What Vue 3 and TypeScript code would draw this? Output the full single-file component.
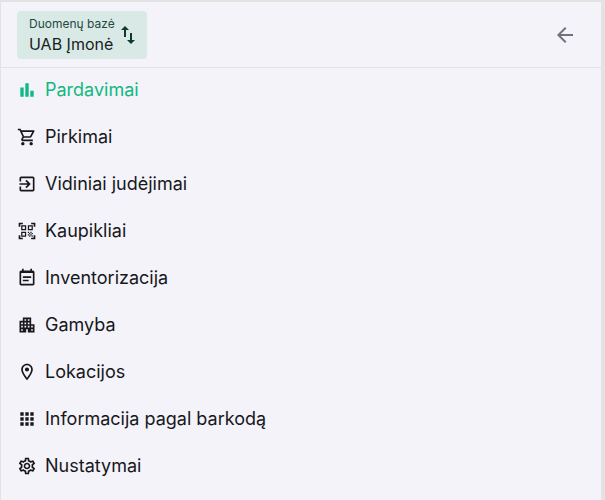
<script setup lang="ts">
interface Item { label: string; d: string; active?: boolean }
const items: Item[] = [
  { label: 'Pardavimai', active: true, d: 'M4 9h4v11H4zm12 4h4v7h-4zm-6-9h4v16h-4z' },
  { label: 'Pirkimai', d: 'M15.55 13c.75 0 1.41-.41 1.75-1.03l3.58-6.49c.37-.66-.11-1.48-.87-1.48H5.21l-.94-2H1v2h2l3.6 7.59-1.35 2.44C4.52 15.37 5.48 17 7 17h12v-2H7l1.1-2h7.45zM6.16 6h12.15l-2.76 5H8.53L6.16 6zM7 18c-1.1 0-1.99.9-1.99 2S5.9 22 7 22s2-.9 2-2-.9-2-2-2zm10 0c-1.1 0-1.99.9-1.99 2s.89 2 1.99 2 2-.9 2-2-.9-2-2-2z' },
  { label: 'Vidiniai judėjimai', d: 'M10.09 15.59 11.5 17l5-5-5-5-1.41 1.41L12.67 11H3v2h9.67l-2.58 2.59zM19 3H5c-1.11 0-2 .9-2 2v4h2V5h14v14H5v-4H3v4c0 1.1.89 2 2 2h14c1.1 0 2-.9 2-2V5c0-1.1-.9-2-2-2z' },
  { label: 'Kaupikliai', d: 'M9.5 6.5v3h-3v-3h3M11 5H5v6h6V5zm-1.5 9.5v3h-3v-3h3M11 13H5v6h6v-6zm6.5-6.5v3h-3v-3h3M19 5h-6v6h6V5zm-6 8h1.5v1.5H13V13zm1.5 1.5H16V16h-1.5v-1.5zM16 13h1.5v1.5H16V13zm-3 3h1.5v1.5H13V16zm1.5 1.5H16V19h-1.5v-1.5zM16 16h1.5v1.5H16V16zm1.5-1.5H19V16h-1.5v-1.5zm0 3H19V19h-1.5v-1.5zM22 7h-2V4h-3V2h5v5zm0 15v-5h-2v3h-3v2h5zM2 22h5v-2H4v-3H2v5zM2 2v5h2V4h3V2H2z' },
  { label: 'Inventorizacija', d: 'M17 10H7v2h10v-2zM19 3h-1V1h-2v2H8V1H6v2H5c-1.1 0-2 .9-2 2v14c0 1.1.9 2 2 2h14c1.1 0 2-.9 2-2V5c0-1.1-.9-2-2-2zm0 16H5V6h14v13zm-5-5H7v2h7v-2z' },
  { label: 'Gamyba', d: 'M17 11V3H7v4H3v14h8v-4h2v4h8V11h-4zM7 19H5v-2h2v2zm0-4H5v-2h2v2zm0-4H5V9h2v2zm4 4H9v-2h2v2zm0-4H9V9h2v2zm0-4H9V5h2v2zm4 8h-2v-2h2v2zm0-4h-2V9h2v2zm0-4h-2V5h2v2zm4 12h-2v-2h2v2zm0-4h-2v-2h2v2z' },
  { label: 'Lokacijos', d: 'M12 2C8.13 2 5 5.13 5 9c0 5.25 7 13 7 13s7-7.75 7-13c0-3.87-3.13-7-7-7zM7 9c0-2.76 2.24-5 5-5s5 2.24 5 5c0 2.88-2.88 7.19-5 9.88C9.92 16.21 7 11.85 7 9zm5-2.5a2.5 2.5 0 1 0 0 5 2.5 2.5 0 0 0 0-5z' },
  { label: 'Informacija pagal barkodą', d: 'M4 8h4V4H4v4zm6 12h4v-4h-4v4zm-6 0h4v-4H4v4zm0-6h4v-4H4v4zm6 0h4v-4h-4v4zm6-10v4h4V4h-4zm-6 4h4V4h-4v4zm6 6h4v-4h-4v4zm0 6h4v-4h-4v4z' },
  { label: 'Nustatymai', d: 'M19.43 12.98c.04-.32.07-.64.07-.98 0-.34-.03-.66-.07-.98l2.11-1.65c.19-.15.24-.42.12-.64l-2-3.46c-.09-.16-.26-.25-.44-.25-.06 0-.12.01-.17.03l-2.49 1c-.52-.4-1.08-.73-1.69-.98l-.38-2.65C14.46 2.18 14.25 2 14 2h-4c-.25 0-.46.18-.49.42l-.38 2.65c-.61.25-1.17.59-1.69.98l-2.49-1c-.06-.02-.12-.03-.18-.03-.17 0-.34.09-.43.25l-2 3.46c-.13.22-.07.49.12.64l2.11 1.65c-.04.32-.07.65-.07.98 0 .33.03.66.07.98l-2.11 1.65c-.19.15-.24.42-.12.64l2 3.46c.09.16.26.25.44.25.06 0 .12-.01.17-.03l2.49-1c.52.4 1.08.73 1.69.98l.38 2.65c.03.24.24.42.49.42h4c.25 0 .46-.18.49-.42l.38-2.65c.61-.25 1.17-.59 1.69-.98l2.49 1c.06.02.12.03.18.03.17 0 .34-.09.43-.25l2-3.46c.12-.22.07-.49-.12-.64l-2.11-1.65zm-1.98-1.71c.04.31.05.52.05.73 0 .21-.02.43-.05.73l-.14 1.13.89.7 1.08.84-.7 1.21-1.27-.51-1.04-.42-.9.68c-.43.32-.84.56-1.25.73l-1.06.43-.16 1.13-.2 1.35h-1.4l-.19-1.35-.16-1.13-1.06-.43c-.43-.18-.83-.41-1.23-.71l-.91-.7-1.06.43-1.27.51-.7-1.21 1.08-.84.89-.7-.14-1.13c-.03-.31-.05-.54-.05-.74s.02-.43.05-.73l.14-1.13-.89-.7-1.08-.84.7-1.21 1.27.51 1.04.42.9-.68c.43-.32.84-.56 1.25-.73l1.06-.43.16-1.13.2-1.35h1.39l.19 1.35.16 1.13 1.06.43c.43.18.83.41 1.23.71l.91.7 1.06-.43 1.27-.51.7 1.21-1.07.85-.89.7.14 1.13zM12 8c-2.21 0-4 1.79-4 4s1.79 4 4 4 4-1.79 4-4-1.79-4-4-4zm0 6c-1.1 0-2-.9-2-2s.9-2 2-2 2 .9 2 2-.9 2-2 2z' },
]
</script>

<template>
  <aside class="sidebar">
    <header class="top">
      <button class="db">
        <span class="db-text">
          <span class="db-label">Duomenų bazė</span>
          <span class="db-name">UAB Įmonė</span>
        </span>
        <svg class="swap" viewBox="0 0 24 24" width="24" height="24"><path d="M16 17.01V10h-2v7.01h-3L15 21l4-3.99h-3zM9 3 5 6.99h3V14h2V6.99h3L9 3z" /></svg>
      </button>
      <svg class="back" viewBox="0 0 24 24" width="24" height="24"><path d="M20 11H7.83l5.59-5.59L12 4l-8 8 8 8 1.41-1.41L7.83 13H20v-2z" /></svg>
    </header>
    <nav class="menu">
      <a v-for="item in items" :key="item.label" class="row" :class="{ active: item.active }">
        <svg class="ico" viewBox="0 0 24 24" width="20" height="20"><path :d="item.d" /></svg>
        <span>{{ item.label }}</span>
      </a>
    </nav>
  </aside>
</template>

<style>
html, body { margin: 0; background: #f3f3f9; }
</style>

<style scoped>
.sidebar {
  box-sizing: border-box;
  width: 605px;
  height: 500px;
  overflow: hidden;
  background: #f3f3f9;
  border-top: 2px solid #e3e3e3;
  border-left: 1px solid #e3e3e3;
  border-right: 4px solid #e3e3e3;
  font-family: Inter, "Liberation Sans", sans-serif;
  color: #17171c;
}
.top {
  height: 66px;
  box-sizing: border-box;
  border-bottom: 1px solid #e2e2e8;
  display: flex;
  align-items: center;
  justify-content: space-between;
  padding: 0 24px 0 16px;
}
.db {
  display: flex;
  align-items: center;
  gap: 1px;
  width: 130px;
  height: 48px;
  box-sizing: border-box;
  padding: 0 0 0 12px;
  border: 0;
  border-radius: 4px;
  background: #d9eae6;
  color: #0e3b31;
  font-family: inherit;
  text-align: left;
}
.db-text { display: flex; flex-direction: column; }
.db-label { font-size: 12px; line-height: 18px; color: #24483f; }
.db-name { font-size: 16px; line-height: 22px; color: #17221f; }
.swap { fill: #0e3b31; flex: none; }
.back { fill: #71717a; }
.menu { display: flex; flex-direction: column; }
.row {
  box-sizing: border-box;
  height: 47px;
  display: flex;
  align-items: center;
  gap: 8px;
  padding-left: 16px;
  font-size: 18px;
}
.row:first-child { height: 45px; padding-bottom: 2px; }
.ico { fill: #17171c; flex: none; }
.active { color: #10b981; }
.active .ico { fill: #10b981; }
</style>
